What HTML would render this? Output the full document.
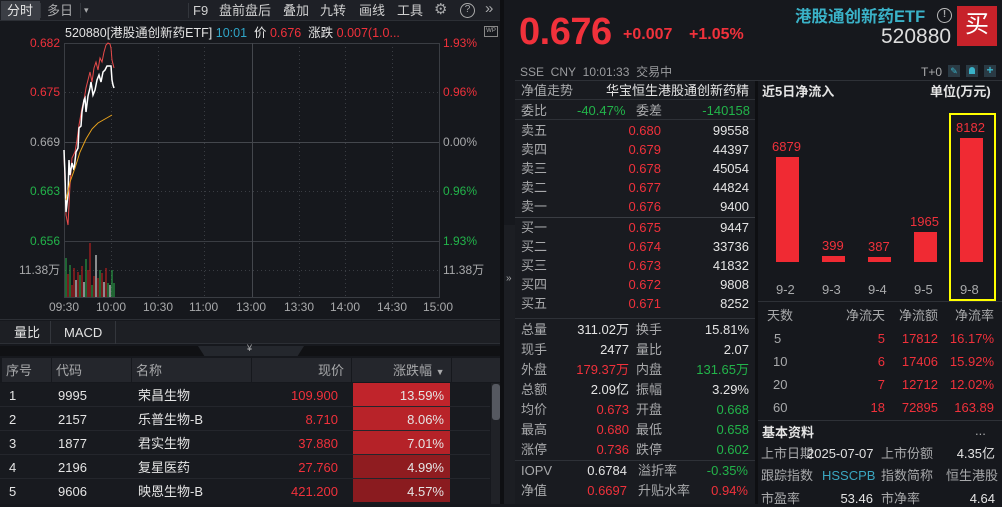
<!DOCTYPE html>
<html><head><meta charset="utf-8"><style>
*{margin:0;padding:0;box-sizing:border-box}
body{width:1002px;height:504px;background:#16181d;overflow:hidden;position:relative;font-family:"Liberation Sans","Noto Sans CJK SC",sans-serif;color:#c9cacc;font-size:13px}
.a{position:absolute;white-space:nowrap;line-height:17px}
.r{color:#f0313b}.g{color:#22b44a}.w{color:#e4e4e4}.gy{color:#a8a9ab}
.ra{text-align:right}
</style></head><body>
<!-- left toolbar -->
<div class="a" style="left:0;top:0;width:500px;height:21px;background:#1e2026;border-bottom:1px solid #2c2f35"></div>
<div class="a" style="left:1px;top:1px;width:39px;height:19px;background:#3b3e45"></div>
<div class="a w" style="left:7px;top:2px;font-size:13px">分时</div>
<div class="a gy" style="left:47px;top:2px">多日</div>
<div class="a gy" style="left:84px;top:2px;font-size:9px">▾</div>
<div class="a" style="left:40px;top:3px;width:1px;height:15px;background:#33363c"></div>
<div class="a" style="left:80px;top:3px;width:1px;height:15px;background:#33363c"></div>
<div class="a" style="left:188px;top:3px;width:1px;height:15px;background:#33363c"></div>
<div class="a gy" style="left:193px;top:2px;color:#d0d0d0">F9</div>
<div class="a gy" style="left:219px;top:2px;color:#d0d0d0">盘前盘后</div>
<div class="a gy" style="left:283px;top:2px;color:#d0d0d0">叠加</div>
<div class="a gy" style="left:320px;top:2px;color:#d0d0d0">九转</div>
<div class="a gy" style="left:359px;top:2px;color:#d0d0d0">画线</div>
<div class="a gy" style="left:397px;top:2px;color:#d0d0d0">工具</div>
<div class="a gy" style="left:434px;top:1px;font-size:15px">⚙</div>
<div class="a gy" style="left:460px;top:3px;width:15px;height:15px;border:1.5px solid #aaa;border-radius:50%;font-size:10px;text-align:center;line-height:12px">?</div>
<div class="a gy" style="left:485px;top:0px;font-size:15px">»</div>
<!-- chart -->
<div class="a w" style="left:65px;top:25px;font-size:12.5px">520880[港股通创新药ETF] <span style="color:#2fa5c8">10:01</span> &nbsp;价 <span class="r">0.676</span> &nbsp;涨跌 <span class="r">0.007(1.0...</span></div>
<div class="a" style="left:484px;top:26px;width:14px;height:11px;border:1px solid #888;font-size:6px;color:#aaa;text-align:center;line-height:9px">WP</div>
<svg class="a" style="left:0;top:0" width="500" height="320">
<g stroke="#3a3d43" stroke-width="1" stroke-dasharray="1,3">
<line x1="65" y1="92.5" x2="439" y2="92.5"/><line x1="65" y1="191.5" x2="439" y2="191.5"/><line x1="65" y1="270.5" x2="439" y2="270.5"/>
<line x1="158.5" y1="43" x2="158.5" y2="297"/><line x1="204.5" y1="43" x2="204.5" y2="297"/><line x1="299.5" y1="43" x2="299.5" y2="297"/><line x1="345.5" y1="43" x2="345.5" y2="297"/><line x1="392.5" y1="43" x2="392.5" y2="297"/><line x1="111.5" y1="43" x2="111.5" y2="297"/>
</g>
<g stroke="#3a3d43" stroke-width="1" fill="none">
<rect x="64.5" y="43.5" width="375" height="254"/>
<line x1="65" y1="142.5" x2="439" y2="142.5" stroke="#44474d"/>
<line x1="65" y1="241.5" x2="439" y2="241.5"/>
<line x1="252.5" y1="43" x2="252.5" y2="297" stroke="#44474d"/>
</g>
<polyline fill="none" stroke="#e84a4a" stroke-width="1" points="64,152 66,215 68,225 70,185 72,158 75,152 77,140 79,125 82,108 84,100 86,88 88,80 90,72 92,82 94,68 96,62 98,70 100,58 102,62 104,52 106,45 108,43 110,44 111,48 112,60 114,68"/>
<polyline fill="none" stroke="#ffffff" stroke-width="1.5" points="64,150 65,175 66,212 68,195 69,160 70,175 72,163 74,170 76,152 78,148 79,128 81,126 82,112 84,100 85,98 86,112 88,96 90,88 91,82 93,95 95,90 97,80 99,75 101,82 103,72 105,70 107,66 109,66 111,66 112,80 113,85 114,88"/>
<polyline fill="none" stroke="#e8a21c" stroke-width="1" points="66,200 70,182 75,168 80,152 86,139 92,129 98,123 105,119 112,115"/>
<g stroke-width="1">
<line x1="66" y1="297" x2="66" y2="258" stroke="#2ab54a"/><line x1="68" y1="297" x2="68" y2="274" stroke="#d42020"/><line x1="70" y1="297" x2="70" y2="265" stroke="#2ab54a"/><line x1="72" y1="297" x2="72" y2="285" stroke="#d42020"/><line x1="74" y1="297" x2="74" y2="268" stroke="#d42020"/><line x1="76" y1="297" x2="76" y2="280" stroke="#fff"/><line x1="78" y1="297" x2="78" y2="272" stroke="#d42020"/><line x1="80" y1="297" x2="80" y2="275" stroke="#2ab54a"/><line x1="82" y1="297" x2="82" y2="266" stroke="#d42020"/><line x1="84" y1="297" x2="84" y2="282" stroke="#fff"/><line x1="86" y1="297" x2="86" y2="259" stroke="#2ab54a"/><line x1="88" y1="297" x2="88" y2="270" stroke="#d42020"/><line x1="90" y1="297" x2="90" y2="243" stroke="#d42020"/><line x1="92" y1="297" x2="92" y2="285" stroke="#2ab54a"/><line x1="94" y1="297" x2="94" y2="276" stroke="#d42020"/><line x1="96" y1="297" x2="96" y2="255" stroke="#fff"/><line x1="98" y1="297" x2="98" y2="278" stroke="#d42020"/><line x1="100" y1="297" x2="100" y2="270" stroke="#2ab54a"/><line x1="102" y1="297" x2="102" y2="273" stroke="#d42020"/><line x1="104" y1="297" x2="104" y2="282" stroke="#fff"/><line x1="106" y1="297" x2="106" y2="268" stroke="#d42020"/><line x1="108" y1="297" x2="108" y2="283" stroke="#2ab54a"/><line x1="110" y1="297" x2="110" y2="285" stroke="#fff"/><line x1="112" y1="297" x2="112" y2="270" stroke="#2ab54a"/><line x1="114" y1="297" x2="114" y2="283" stroke="#2ab54a"/>
</g>
</svg>
<div class="a r" style="left:30px;top:35px;font-size:12px">0.682</div>
<div class="a r" style="left:30px;top:84px;font-size:12px">0.675</div>
<div class="a gy" style="left:30px;top:134px;font-size:12px">0.669</div>
<div class="a g" style="left:30px;top:183px;font-size:12px">0.663</div>
<div class="a g" style="left:30px;top:233px;font-size:12px">0.656</div>
<div class="a gy" style="left:19px;top:262px;font-size:12px">11.38万</div>
<div class="a r" style="left:443px;top:35px;font-size:12px">1.93%</div>
<div class="a r" style="left:443px;top:84px;font-size:12px">0.96%</div>
<div class="a gy" style="left:443px;top:134px;font-size:12px">0.00%</div>
<div class="a g" style="left:443px;top:183px;font-size:12px">0.96%</div>
<div class="a g" style="left:443px;top:233px;font-size:12px">1.93%</div>
<div class="a gy" style="left:443px;top:262px;font-size:12px">11.38万</div>
<div class="a gy" style="left:49px;top:299px;font-size:12px">09:30</div>
<div class="a gy" style="left:96px;top:299px;font-size:12px">10:00</div>
<div class="a gy" style="left:143px;top:299px;font-size:12px">10:30</div>
<div class="a gy" style="left:189px;top:299px;font-size:12px">11:00</div>
<div class="a gy" style="left:236px;top:299px;font-size:12px">13:00</div>
<div class="a gy" style="left:284px;top:299px;font-size:12px">13:30</div>
<div class="a gy" style="left:330px;top:299px;font-size:12px">14:00</div>
<div class="a gy" style="left:377px;top:299px;font-size:12px">14:30</div>
<div class="a gy" style="left:423px;top:299px;font-size:12px">15:00</div>
<div class="a" style="left:0;top:319px;width:500px;height:1px;background:#2c2f35"></div>
<!-- tabs -->
<div class="a" style="left:0;top:321px;width:500px;height:23px;background:#1d1f24;border-bottom:1px solid #2c2f35"></div>
<div class="a" style="left:50px;top:321px;width:1px;height:23px;background:#33363c"></div>
<div class="a" style="left:115px;top:321px;width:1px;height:23px;background:#33363c"></div>
<div class="a w" style="left:14px;top:324px">量比</div>
<div class="a w" style="left:64px;top:324px">MACD</div>
<div class="a" style="left:0;top:346px;width:500px;height:10px;background:#101114"></div>
<div class="a" style="left:198px;top:346px;width:106px;height:10px;background:#24272d;clip-path:polygon(0 0,100% 0,94% 100%,6% 100%)"></div>
<div class="a gy" style="left:247px;top:342px;font-size:9px;line-height:12px">¥</div>
<!-- table -->
<div class="a" style="left:2px;top:358px;width:498px;height:24px;background:#24262c"></div>
<div class="a" style="left:51px;top:358px;width:1px;height:24px;background:#16181d"></div>
<div class="a" style="left:131px;top:358px;width:1px;height:24px;background:#16181d"></div>
<div class="a" style="left:251px;top:358px;width:1px;height:24px;background:#16181d"></div>
<div class="a" style="left:351px;top:358px;width:1px;height:24px;background:#16181d"></div>
<div class="a" style="left:451px;top:358px;width:1px;height:24px;background:#16181d"></div>
<div class="a gy" style="left:6px;top:362px">序号</div>
<div class="a gy" style="left:56px;top:362px">代码</div>
<div class="a gy" style="left:136px;top:362px">名称</div>
<div class="a gy" style="left:318px;top:362px">现价</div>
<div class="a gy" style="left:393px;top:362px">涨跌幅 <span style="font-size:9px">▼</span></div>
<div class="a" style="left:0;top:383px;width:490px;height:121px;background:#181a1f"></div>
<div class="a" style="left:353px;top:383px;width:97px;height:23px;background:#c0242b"></div>
<div class="a" style="left:353px;top:407px;width:97px;height:23px;background:#b82329"></div>
<div class="a" style="left:353px;top:431px;width:97px;height:23px;background:#b52228"></div>
<div class="a" style="left:353px;top:455px;width:97px;height:23px;background:#8f1c20"></div>
<div class="a" style="left:353px;top:479px;width:97px;height:23px;background:#8a1b1f"></div>
<div class="a" style="left:0;top:406px;width:490px;height:1px;background:#24262c"></div>
<div class="a" style="left:0;top:430px;width:490px;height:1px;background:#24262c"></div>
<div class="a" style="left:0;top:454px;width:490px;height:1px;background:#24262c"></div>
<div class="a" style="left:0;top:478px;width:490px;height:1px;background:#24262c"></div>
<div class="a" style="left:491px;top:383px;width:9px;height:121px;background:#202227"></div>
<div class="a" style="left:492px;top:384px;width:8px;height:36px;background:#555860;border-radius:3px"></div>
<div class="a w" style="left:9px;top:387px">1</div><div class="a w" style="left:58px;top:387px">9995</div><div class="a w" style="left:138px;top:387px">荣昌生物</div><div class="a r ra" style="left:250px;top:387px;width:88px">109.900</div><div class="a w ra" style="left:353px;top:387px;width:91px">13.59%</div>
<div class="a w" style="left:9px;top:411px">2</div><div class="a w" style="left:58px;top:411px">2157</div><div class="a w" style="left:138px;top:411px">乐普生物-B</div><div class="a r ra" style="left:250px;top:411px;width:88px">8.710</div><div class="a w ra" style="left:353px;top:411px;width:91px">8.06%</div>
<div class="a w" style="left:9px;top:435px">3</div><div class="a w" style="left:58px;top:435px">1877</div><div class="a w" style="left:138px;top:435px">君实生物</div><div class="a r ra" style="left:250px;top:435px;width:88px">37.880</div><div class="a w ra" style="left:353px;top:435px;width:91px">7.01%</div>
<div class="a w" style="left:9px;top:459px">4</div><div class="a w" style="left:58px;top:459px">2196</div><div class="a w" style="left:138px;top:459px">复星医药</div><div class="a r ra" style="left:250px;top:459px;width:88px">27.760</div><div class="a w ra" style="left:353px;top:459px;width:91px">4.99%</div>
<div class="a w" style="left:9px;top:483px">5</div><div class="a w" style="left:58px;top:483px">9606</div><div class="a w" style="left:138px;top:483px">映恩生物-B</div><div class="a r ra" style="left:250px;top:483px;width:88px">421.200</div><div class="a w ra" style="left:353px;top:483px;width:91px">4.57%</div>
<!-- separator -->
<div class="a" style="left:500px;top:0;width:4px;height:504px;background:#0e0f12"></div>
<div class="a" style="left:504px;top:225px;width:11px;height:279px;background:#1c1e23"></div>
<div class="a gy" style="left:506px;top:270px;font-size:10px">»</div>
<!-- right top -->
<div class="a r" style="left:519px;top:10px;font-size:38px;line-height:44px;font-weight:bold;letter-spacing:-0.5px">0.676</div>
<div class="a r" style="left:623px;top:26px;font-size:16px;line-height:18px;font-weight:bold">+0.007</div>
<div class="a r" style="left:689px;top:26px;font-size:16px;line-height:18px;font-weight:bold">+1.05%</div>
<div class="a" style="left:795px;top:7px;font-size:16.5px;line-height:20px;font-weight:bold;color:#3ab2c8">港股通创新药ETF</div>
<div class="a gy" style="left:937px;top:8px;width:15px;height:15px;border:1.5px solid #bbb;border-radius:50%;font-size:10px;text-align:center;line-height:12px;font-weight:bold">!</div>
<div class="a" style="left:881px;top:25px;font-size:21px;line-height:24px;color:#dcdcdc">520880</div>
<div class="a" style="left:957px;top:6px;width:40px;height:40px;background:#c7222a;color:#fff;font-size:24px;text-align:center;line-height:38px">买</div>
<div class="a gy" style="left:520px;top:64px;font-size:12px;color:#9a9b9e">SSE&nbsp; CNY&nbsp; 10:01:33&nbsp; 交易中</div>
<div class="a gy" style="left:921px;top:64px;font-size:12px">T+0</div>
<div class="a" style="left:948px;top:65px;width:12px;height:12px;background:#2a3a44;color:#3ab2c8;font-size:9px;line-height:12px;text-align:center">✎</div>
<div class="a" style="left:966px;top:65px;width:12px;height:12px;background:#2a3a44"><div style="margin:2px 3px;width:6px;height:7px;background:#3ab2c8;border-radius:3px 3px 0 0"></div></div>
<div class="a" style="left:984px;top:65px;width:12px;height:12px;background:#2a3a44;color:#3ab2c8;font-size:12px;line-height:11px;text-align:center;font-weight:bold">+</div>
<div class="a" style="left:515px;top:80px;width:487px;height:1px;background:#2e3137"></div>
<!-- order book -->
<div class="a" style="left:515px;top:81px;width:240px;height:423px;background:#191b20"></div>
<div class="a" style="left:755px;top:81px;width:3px;height:423px;background:#0e0f12"></div>
<div class="a gy" style="left:521px;top:82px">净值走势</div>
<div class="a w ra" style="left:560px;top:82px;width:189px">华宝恒生港股通创新药精</div>
<div class="a" style="left:515px;top:99px;width:240px;height:1px;background:#2e3137"></div>
<div class="a gy" style="left:521px;top:102px">委比</div><div class="a g" style="left:577px;top:102px">-40.47%</div><div class="a gy" style="left:636px;top:102px">委差</div><div class="a g ra" style="left:660px;top:102px;width:90px">-140158</div>
<div class="a" style="left:515px;top:119px;width:240px;height:1px;background:#2e3137"></div>
<div class="a gy" style="left:521px;top:122px">卖五</div><div class="a r ra" style="left:580px;top:122px;width:81px">0.680</div><div class="a w ra" style="left:670px;top:122px;width:79px">99558</div>
<div class="a gy" style="left:521px;top:141px">卖四</div><div class="a r ra" style="left:580px;top:141px;width:81px">0.679</div><div class="a w ra" style="left:670px;top:141px;width:79px">44397</div>
<div class="a gy" style="left:521px;top:160px">卖三</div><div class="a r ra" style="left:580px;top:160px;width:81px">0.678</div><div class="a w ra" style="left:670px;top:160px;width:79px">45054</div>
<div class="a gy" style="left:521px;top:179px">卖二</div><div class="a r ra" style="left:580px;top:179px;width:81px">0.677</div><div class="a w ra" style="left:670px;top:179px;width:79px">44824</div>
<div class="a gy" style="left:521px;top:198px">卖一</div><div class="a r ra" style="left:580px;top:198px;width:81px">0.676</div><div class="a w ra" style="left:670px;top:198px;width:79px">9400</div>
<div class="a" style="left:515px;top:217px;width:240px;height:1px;background:#3a3d43"></div>
<div class="a gy" style="left:521px;top:219px">买一</div><div class="a r ra" style="left:580px;top:219px;width:81px">0.675</div><div class="a w ra" style="left:670px;top:219px;width:79px">9447</div>
<div class="a gy" style="left:521px;top:238px">买二</div><div class="a r ra" style="left:580px;top:238px;width:81px">0.674</div><div class="a w ra" style="left:670px;top:238px;width:79px">33736</div>
<div class="a gy" style="left:521px;top:257px">买三</div><div class="a r ra" style="left:580px;top:257px;width:81px">0.673</div><div class="a w ra" style="left:670px;top:257px;width:79px">41832</div>
<div class="a gy" style="left:521px;top:276px">买四</div><div class="a r ra" style="left:580px;top:276px;width:81px">0.672</div><div class="a w ra" style="left:670px;top:276px;width:79px">9808</div>
<div class="a gy" style="left:521px;top:295px">买五</div><div class="a r ra" style="left:580px;top:295px;width:81px">0.671</div><div class="a w ra" style="left:670px;top:295px;width:79px">8252</div>
<div class="a" style="left:515px;top:318px;width:240px;height:1px;background:#2e3137"></div>
<div class="a gy" style="left:521px;top:321px">总量</div><div class="a w ra" style="left:560px;top:321px;width:69px">311.02万</div><div class="a gy" style="left:636px;top:321px">换手</div><div class="a w ra" style="left:670px;top:321px;width:79px">15.81%</div>
<div class="a gy" style="left:521px;top:341px">现手</div><div class="a w ra" style="left:560px;top:341px;width:69px">2477</div><div class="a gy" style="left:636px;top:341px">量比</div><div class="a w ra" style="left:670px;top:341px;width:79px">2.07</div>
<div class="a gy" style="left:521px;top:361px">外盘</div><div class="a r ra" style="left:560px;top:361px;width:69px">179.37万</div><div class="a gy" style="left:636px;top:361px">内盘</div><div class="a g ra" style="left:670px;top:361px;width:79px">131.65万</div>
<div class="a gy" style="left:521px;top:381px">总额</div><div class="a w ra" style="left:560px;top:381px;width:69px">2.09亿</div><div class="a gy" style="left:636px;top:381px">振幅</div><div class="a w ra" style="left:670px;top:381px;width:79px">3.29%</div>
<div class="a gy" style="left:521px;top:401px">均价</div><div class="a r ra" style="left:560px;top:401px;width:69px">0.673</div><div class="a gy" style="left:636px;top:401px">开盘</div><div class="a g ra" style="left:670px;top:401px;width:79px">0.668</div>
<div class="a gy" style="left:521px;top:421px">最高</div><div class="a r ra" style="left:560px;top:421px;width:69px">0.680</div><div class="a gy" style="left:636px;top:421px">最低</div><div class="a g ra" style="left:670px;top:421px;width:79px">0.658</div>
<div class="a gy" style="left:521px;top:441px">涨停</div><div class="a r ra" style="left:560px;top:441px;width:69px">0.736</div><div class="a gy" style="left:636px;top:441px">跌停</div><div class="a g ra" style="left:670px;top:441px;width:79px">0.602</div>
<div class="a" style="left:515px;top:460px;width:240px;height:1px;background:#2e3137"></div>
<div class="a gy" style="left:521px;top:462px">IOPV</div><div class="a w ra" style="left:560px;top:462px;width:67px">0.6784</div><div class="a gy" style="left:638px;top:462px">溢折率</div><div class="a g ra" style="left:670px;top:462px;width:78px">-0.35%</div>
<div class="a gy" style="left:521px;top:482px">净值</div><div class="a r ra" style="left:560px;top:482px;width:67px">0.6697</div><div class="a gy" style="left:638px;top:482px">升贴水率</div><div class="a r ra" style="left:670px;top:482px;width:78px">0.94%</div>
<!-- net flow -->
<div class="a w" style="left:762px;top:83px;font-weight:bold">近5日净流入</div>
<div class="a w" style="left:930px;top:83px;font-weight:bold">单位(万元)</div>
<div class="a" style="left:776px;top:157px;width:23px;height:105px;background:#f02a33"></div>
<div class="a" style="left:822px;top:256px;width:23px;height:6px;background:#f02a33"></div>
<div class="a" style="left:868px;top:257px;width:23px;height:5px;background:#f02a33"></div>
<div class="a" style="left:914px;top:232px;width:23px;height:30px;background:#f02a33"></div>
<div class="a" style="left:960px;top:138px;width:23px;height:124px;background:#f02a33"></div>
<div class="a r" style="left:772px;top:138px">6879</div>
<div class="a r" style="left:822px;top:237px">399</div>
<div class="a r" style="left:868px;top:238px">387</div>
<div class="a r" style="left:910px;top:213px">1965</div>
<div class="a r" style="left:956px;top:119px">8182</div>
<div class="a gy" style="left:776px;top:281px">9-2</div>
<div class="a gy" style="left:822px;top:281px">9-3</div>
<div class="a gy" style="left:868px;top:281px">9-4</div>
<div class="a gy" style="left:914px;top:281px">9-5</div>
<div class="a gy" style="left:960px;top:281px">9-8</div>
<div class="a" style="left:949px;top:113px;width:47px;height:188px;border:2px solid #ffff00"></div>
<div class="a" style="left:758px;top:301px;width:244px;height:1px;background:#2e3137"></div>
<div class="a gy" style="left:767px;top:307px">天数</div>
<div class="a gy ra" style="left:840px;top:307px;width:45px">净流天</div>
<div class="a gy ra" style="left:893px;top:307px;width:45px">净流额</div>
<div class="a gy ra" style="left:949px;top:307px;width:45px">净流率</div>
<div class="a gy" style="left:774px;top:330px">5</div><div class="a r ra" style="left:840px;top:330px;width:45px">5</div><div class="a r ra" style="left:893px;top:330px;width:45px">17812</div><div class="a r ra" style="left:940px;top:330px;width:54px">16.17%</div>
<div class="a gy" style="left:773px;top:353px">10</div><div class="a r ra" style="left:840px;top:353px;width:45px">6</div><div class="a r ra" style="left:893px;top:353px;width:45px">17406</div><div class="a r ra" style="left:940px;top:353px;width:54px">15.92%</div>
<div class="a gy" style="left:773px;top:376px">20</div><div class="a r ra" style="left:840px;top:376px;width:45px">7</div><div class="a r ra" style="left:893px;top:376px;width:45px">12712</div><div class="a r ra" style="left:940px;top:376px;width:54px">12.02%</div>
<div class="a gy" style="left:773px;top:399px">60</div><div class="a r ra" style="left:840px;top:399px;width:45px">18</div><div class="a r ra" style="left:893px;top:399px;width:45px">72895</div><div class="a r ra" style="left:940px;top:399px;width:54px">163.89</div>
<div class="a" style="left:758px;top:420px;width:244px;height:1px;background:#2e3137"></div>
<div class="a w" style="left:762px;top:424px;font-weight:bold">基本资料</div>
<div class="a gy" style="left:975px;top:422px">...</div>
<div class="a gy" style="left:761px;top:445px">上市日期</div><div class="a w" style="left:807px;top:445px;color:#e0e0e0">2025-07-07</div><div class="a gy" style="left:881px;top:445px">上市份额</div><div class="a w ra" style="left:940px;top:445px;width:55px">4.35亿</div>
<div class="a gy" style="left:761px;top:467px">跟踪指数</div><div class="a" style="left:822px;top:467px;color:#3aa6c0">HSSCPB</div><div class="a gy" style="left:881px;top:467px">指数简称</div><div class="a gy ra" style="left:930px;top:467px;width:68px">恒生港股</div>
<div class="a gy" style="left:761px;top:490px">市盈率</div><div class="a w ra" style="left:820px;top:490px;width:53px">53.46</div><div class="a gy" style="left:881px;top:490px">市净率</div><div class="a w ra" style="left:940px;top:490px;width:55px">4.64</div>
</body></html>
